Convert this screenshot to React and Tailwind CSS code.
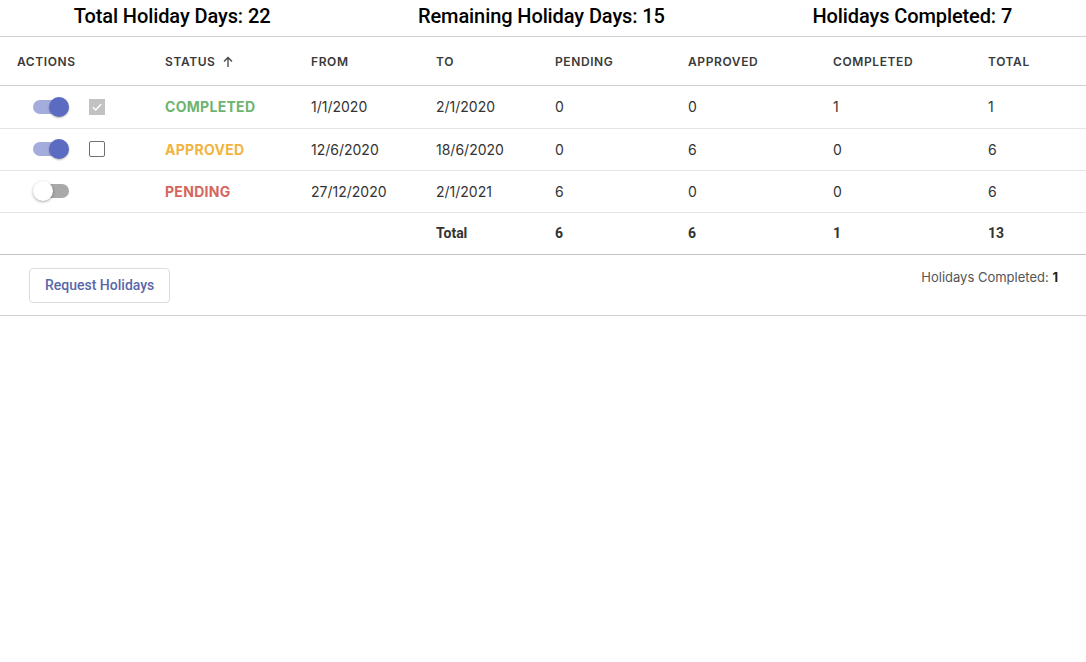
import React from "react";

const rows = [
  { on: true, check: "checked", status: "COMPLETED", color: "text-[#6cb46f]", from: "1/1/2020", to: "2/1/2020", p: 0, a: 0, c: 1, t: 1 },
  { on: true, check: "empty", status: "APPROVED", color: "text-[#f1b43f]", from: "12/6/2020", to: "18/6/2020", p: 0, a: 6, c: 0, t: 6 },
  { on: false, check: null, status: "PENDING", color: "text-[#d6665c]", from: "27/12/2020", to: "2/1/2021", p: 6, a: 0, c: 0, t: 6 },
];

function Toggle({ on }) {
  if (on) {
    return (
      <div className="relative w-[36px] h-[20px] flex items-center">
        <div className="w-[33px] h-[14px] rounded-full bg-[#a4acdc]" />
        <div className="absolute right-0 top-0 w-[20px] h-[20px] rounded-full bg-[#5b6bc2] shadow-[0_1px_2px_rgba(0,0,0,0.3)]" />
      </div>
    );
  }
  return (
    <div className="relative w-[36px] h-[20px] flex items-center justify-end">
      <div className="w-[33px] h-[14px] rounded-full bg-[#a9a9a9]" />
      <div className="absolute left-0 top-0 w-[20px] h-[20px] rounded-full bg-white shadow-[0_1px_3px_rgba(0,0,0,0.35)]" />
    </div>
  );
}

function Check({ kind }) {
  if (kind === "checked") {
    return (
      <div className="w-[16px] h-[16px] bg-[#c2c2c2] flex items-center justify-center">
        <svg width="14" height="14" viewBox="0 0 14 14" fill="none">
          <path d="M2.8 7.2 L5.7 10 L11.2 4" stroke="white" strokeWidth="1.5" />
        </svg>
      </div>
    );
  }
  if (kind === "empty") {
    return <div className="w-[16px] h-[16px] border-[1.5px] border-[#6f6f6f] rounded-[2px]" />;
  }
  return <div className="w-[16px] h-[16px]" />;
}

export default function App() {
  return (
    <div className="w-[1086px] h-[662px] bg-white text-[#333]" style={{ fontFamily: "Inter, 'Liberation Sans', sans-serif" }}>
      {/* summary */}
      <div
        className="flex justify-around items-center h-[37px] pb-[4px] border-b border-[#d0d0d0] text-[20px] font-medium text-black tracking-[-0.1px]"
        style={{ fontFamily: "Roboto, 'Liberation Sans', sans-serif" }}
      >
        <span>Total Holiday Days: 22</span>
        <span>Remaining Holiday Days: 15</span>
        <span>Holidays Completed: 7</span>
      </div>

      <table className="w-full border-collapse table-fixed">
        <colgroup>
          <col className="w-[165px]" />
          <col className="w-[146px]" />
          <col className="w-[125px]" />
          <col className="w-[119px]" />
          <col className="w-[133px]" />
          <col className="w-[145px]" />
          <col className="w-[155px]" />
          <col />
        </colgroup>
        <thead>
          <tr className="h-[48px] border-b border-[#d0d0d0] text-[12px] text-[#3a3a3a] tracking-[0.6px]">
            <th className="text-left pl-[17px] pt-[3px] font-semibold">ACTIONS</th>
            <th className="text-left pt-[3px] font-semibold">
              <span className="inline-flex items-center gap-[6px]">
                STATUS
                <svg width="12" height="12" viewBox="0 0 12 12" fill="none">
                  <path d="M6 11 V1.5 M2 5.5 L6 1.5 L10 5.5" stroke="#444" strokeWidth="1.3" />
                </svg>
              </span>
            </th>
            <th className="text-left pt-[3px] font-semibold">FROM</th>
            <th className="text-left pt-[3px] font-semibold">TO</th>
            <th className="text-left pt-[3px] font-semibold">PENDING</th>
            <th className="text-left pt-[3px] font-semibold">APPROVED</th>
            <th className="text-left pt-[3px] font-semibold">COMPLETED</th>
            <th className="text-left pt-[3px] font-semibold">TOTAL</th>
          </tr>
        </thead>
        <tbody className="text-[14px] text-[#333]">
          {rows.map((r, i) => (
            <tr key={i} className={`border-b border-[#e4e4e4] ${i === 0 ? "h-[43px]" : "h-[42px]"}`}>
              <td>
                <div className="flex items-center pl-[33px] gap-[20px]">
                  <Toggle on={r.on} />
                  <Check kind={r.check} />
                </div>
              </td>
              <td className={`font-bold ${r.color} tracking-[0.3px]`}>{r.status}</td>
              <td>{r.from}</td>
              <td>{r.to}</td>
              <td>{r.p}</td>
              <td>{r.a}</td>
              <td>{r.c}</td>
              <td>{r.t}</td>
            </tr>
          ))}
          <tr
            className="h-[42px] border-b border-[#c4c4c4] font-bold text-[14px] text-[#333]"
            style={{ fontFamily: "Roboto, 'Liberation Sans', sans-serif" }}
          >
            <td />
            <td />
            <td />
            <td className="pt-[1px]">Total</td>
            <td className="pt-[1px]">6</td>
            <td className="pt-[1px]">6</td>
            <td className="pt-[1px]">1</td>
            <td className="pt-[1px]">13</td>
          </tr>
        </tbody>
      </table>

      {/* footer */}
      <div className="flex justify-between items-start h-[61px] border-b border-[#d0d0d0]">
        <button
          className="ml-[29px] mt-[13px] h-[35px] px-[15px] border border-[#dcdcdc] rounded-[4px] text-[14px] font-medium text-[#5a67a8]"
          style={{ fontFamily: "Roboto, 'Liberation Sans', sans-serif" }}
        >
          Request Holidays
        </button>
        <div className="mt-[13px] mr-[28px] text-[13px] text-[#555]">
          Holidays Completed: <span className="font-bold text-[#222]">1</span>
        </div>
      </div>
    </div>
  );
}
